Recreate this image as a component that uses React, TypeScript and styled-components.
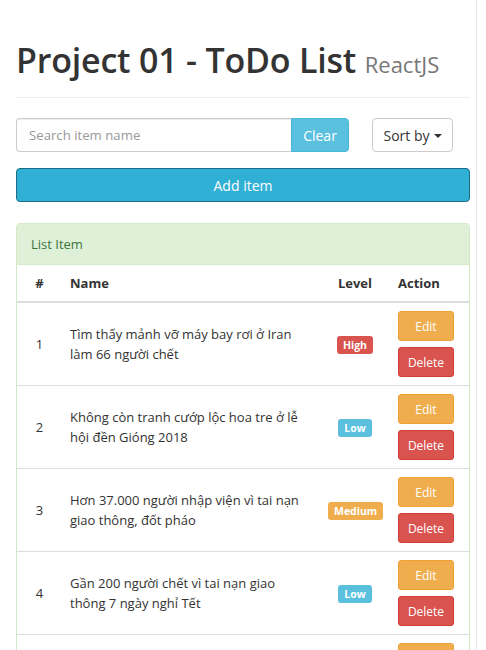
import React from "react";
import styled, { createGlobalStyle } from "styled-components";

const FONT = `"Open Sans", "Noto Sans", "Liberation Sans", sans-serif`;

const GlobalStyle = createGlobalStyle`
  html, body { margin: 0; padding: 0; background: #fff; }
  body {
    font-family: ${FONT};
    font-size: 14px;
    line-height: 20px;
    color: #333;
  }
  * { box-sizing: border-box; }
`;

const ScrollEdge = styled.div`
  position: fixed;
  top: 0;
  bottom: 0;
  left: 476px;
  width: 10px;
  background: #fff;
  border-left: 1px solid #e6e6e6;
`;

const Page = styled.div`
  width: 470px;
  padding-left: 16px;
  padding-bottom: 40px;
`;

const Content = styled.div`
  width: 454px;
`;

const PageHeader = styled.div`
  padding-top: 37px;
  padding-bottom: 10px;
  border-bottom: 1px solid #eee;
  margin-bottom: 20px;
`;

const Title = styled.h1`
  margin: 0;
  font-size: 34px;
  font-weight: 600;
  line-height: 46px;
  color: #333;
  letter-spacing: -0.2px;
`;

const Small = styled.small`
  font-size: 22px;
  color: #777;
  font-weight: 400;
  letter-spacing: 0;
`;

const Toolbar = styled.div`
  display: flex;
  align-items: center;
  gap: 23px;
`;

const SearchGroup = styled.div`
  display: flex;
  width: 333px;
`;

const SearchInput = styled.input`
  flex: 1;
  min-width: 0;
  height: 34px;
  padding: 6px 12px;
  border: 1px solid #ccc;
  border-right: none;
  border-radius: 4px 0 0 4px;
  box-shadow: inset 0 1px 1px rgba(0, 0, 0, 0.075);
  font-family: ${FONT};
  font-size: 13.2px;
  color: #555;
  outline: none;
  &::placeholder { color: #999; }
`;

const ClearButton = styled.button`
  width: 58px;
  height: 34px;
  border: 1px solid #46b8da;
  background: #5bc0de;
  color: #fff;
  border-radius: 0 4px 4px 0;
  font-family: ${FONT};
  font-size: 14px;
  padding: 0;
`;

const SortButton = styled.button`
  width: 81px;
  height: 34px;
  background: #fff;
  border: 1px solid #ccc;
  border-radius: 4px;
  color: #333;
  font-family: ${FONT};
  font-size: 14px;
  padding: 0;
  display: flex;
  align-items: center;
  justify-content: center;
  gap: 4px;
`;

const Caret = styled.span`
  display: inline-block;
  width: 0;
  height: 0;
  margin-top: 2px;
  border-top: 4px solid #333;
  border-left: 4px solid transparent;
  border-right: 4px solid transparent;
`;

const AddButton = styled.button`
  display: block;
  width: 100%;
  height: 34px;
  margin-top: 16px;
  background: #31b0d5;
  border: 1px solid #1b6d85;
  border-radius: 4px;
  color: #fff;
  font-family: ${FONT};
  font-size: 14px;
  padding: 0;
`;

const Panel = styled.div`
  margin-top: 21px;
  border: 1px solid #d6e9c6;
  border-radius: 4px;
  overflow: hidden;
`;

const PanelHeading = styled.div`
  background: #dff0d8;
  color: #3c763d;
  padding: 10px 14px;
  border-bottom: 1px solid #d6e9c6;
  font-size: 13px;
`;

const Table = styled.table`
  width: 100%;
  border-collapse: collapse;
  table-layout: fixed;
`;

const Th = styled.th<{ $w?: number; $align?: string }>`
  width: ${(p) => (p.$w ? `${p.$w}px` : "auto")};
  text-align: ${(p) => p.$align || "left"};
  padding: 8px;
  font-weight: 700;
  font-size: 13px;
  line-height: 20px;
  border-bottom: 2px solid #ddd;
`;

const Td = styled.td<{ $align?: string }>`
  text-align: ${(p) => p.$align || "left"};
  vertical-align: middle;
  padding: 8px;
  border-top: 1px solid #ddd;
  font-size: 13px;
  line-height: 20px;
`;

const Row = styled.tr`
  &:first-child td { border-top: none; }
`;

const LEVEL_COLORS: Record<string, string> = {
  High: "#d9534f",
  Low: "#5bc0de",
  Medium: "#f0ad4e",
};

const Label = styled.span<{ $level: string }>`
  display: inline-block;
  background: ${(p) => LEVEL_COLORS[p.$level]};
  color: #fff;
  font-weight: 700;
  font-size: 10.5px;
  line-height: 1;
  padding: 4px 6px 4px;
  border-radius: 3px;
`;

const Actions = styled.div`
  display: flex;
  flex-direction: column;
  gap: 6px;
  width: 56px;
`;

const ActionButton = styled.button<{ $kind: "edit" | "delete" }>`
  height: 30px;
  width: 56px;
  padding: 0;
  border-radius: 3px;
  font-family: ${FONT};
  font-size: 12px;
  color: #fff;
  background: ${(p) => (p.$kind === "edit" ? "#f0ad4e" : "#d9534f")};
  border: 1px solid ${(p) => (p.$kind === "edit" ? "#eea236" : "#d43f3a")};
`;

const items = [
  { name: "Tìm thấy mảnh vỡ máy bay rơi ở Iran làm 66 người chết", level: "High" },
  { name: "Không còn tranh cướp lộc hoa tre ở lễ hội đền Gióng 2018", level: "Low" },
  { name: "Hơn 37.000 người nhập viện vì tai nạn giao thông, đốt pháo", level: "Medium" },
  { name: "Gần 200 người chết vì tai nạn giao thông 7 ngày nghỉ Tết", level: "Low" },
  { name: "Học sinh Hà Nội đi học trở lại sau kỳ nghỉ Tết", level: "High" },
];

export default function App() {
  return (
    <>
      <GlobalStyle />
      <Page>
        <Content>
          <PageHeader>
            <Title>
              Project 01 - ToDo List <Small>ReactJS</Small>
            </Title>
          </PageHeader>
          <Toolbar>
            <SearchGroup>
              <SearchInput placeholder="Search item name" />
              <ClearButton>Clear</ClearButton>
            </SearchGroup>
            <SortButton>
              Sort by <Caret />
            </SortButton>
          </Toolbar>
          <AddButton>Add item</AddButton>
          <Panel>
            <PanelHeading>List Item</PanelHeading>
            <Table>
              <thead>
                <tr>
                  <Th $w={45} $align="center">#</Th>
                  <Th>Name</Th>
                  <Th $w={70} $align="center">Level</Th>
                  <Th $w={79}>Action</Th>
                </tr>
              </thead>
              <tbody>
                {items.map((it, i) => (
                  <Row key={i}>
                    <Td $align="center">{i + 1}</Td>
                    <Td>{it.name}</Td>
                    <Td $align="center">
                      <Label $level={it.level}>{it.level}</Label>
                    </Td>
                    <Td>
                      <Actions>
                        <ActionButton $kind="edit">Edit</ActionButton>
                        <ActionButton $kind="delete">Delete</ActionButton>
                      </Actions>
                    </Td>
                  </Row>
                ))}
              </tbody>
            </Table>
          </Panel>
        </Content>
      </Page>
      <ScrollEdge />
    </>
  );
}
